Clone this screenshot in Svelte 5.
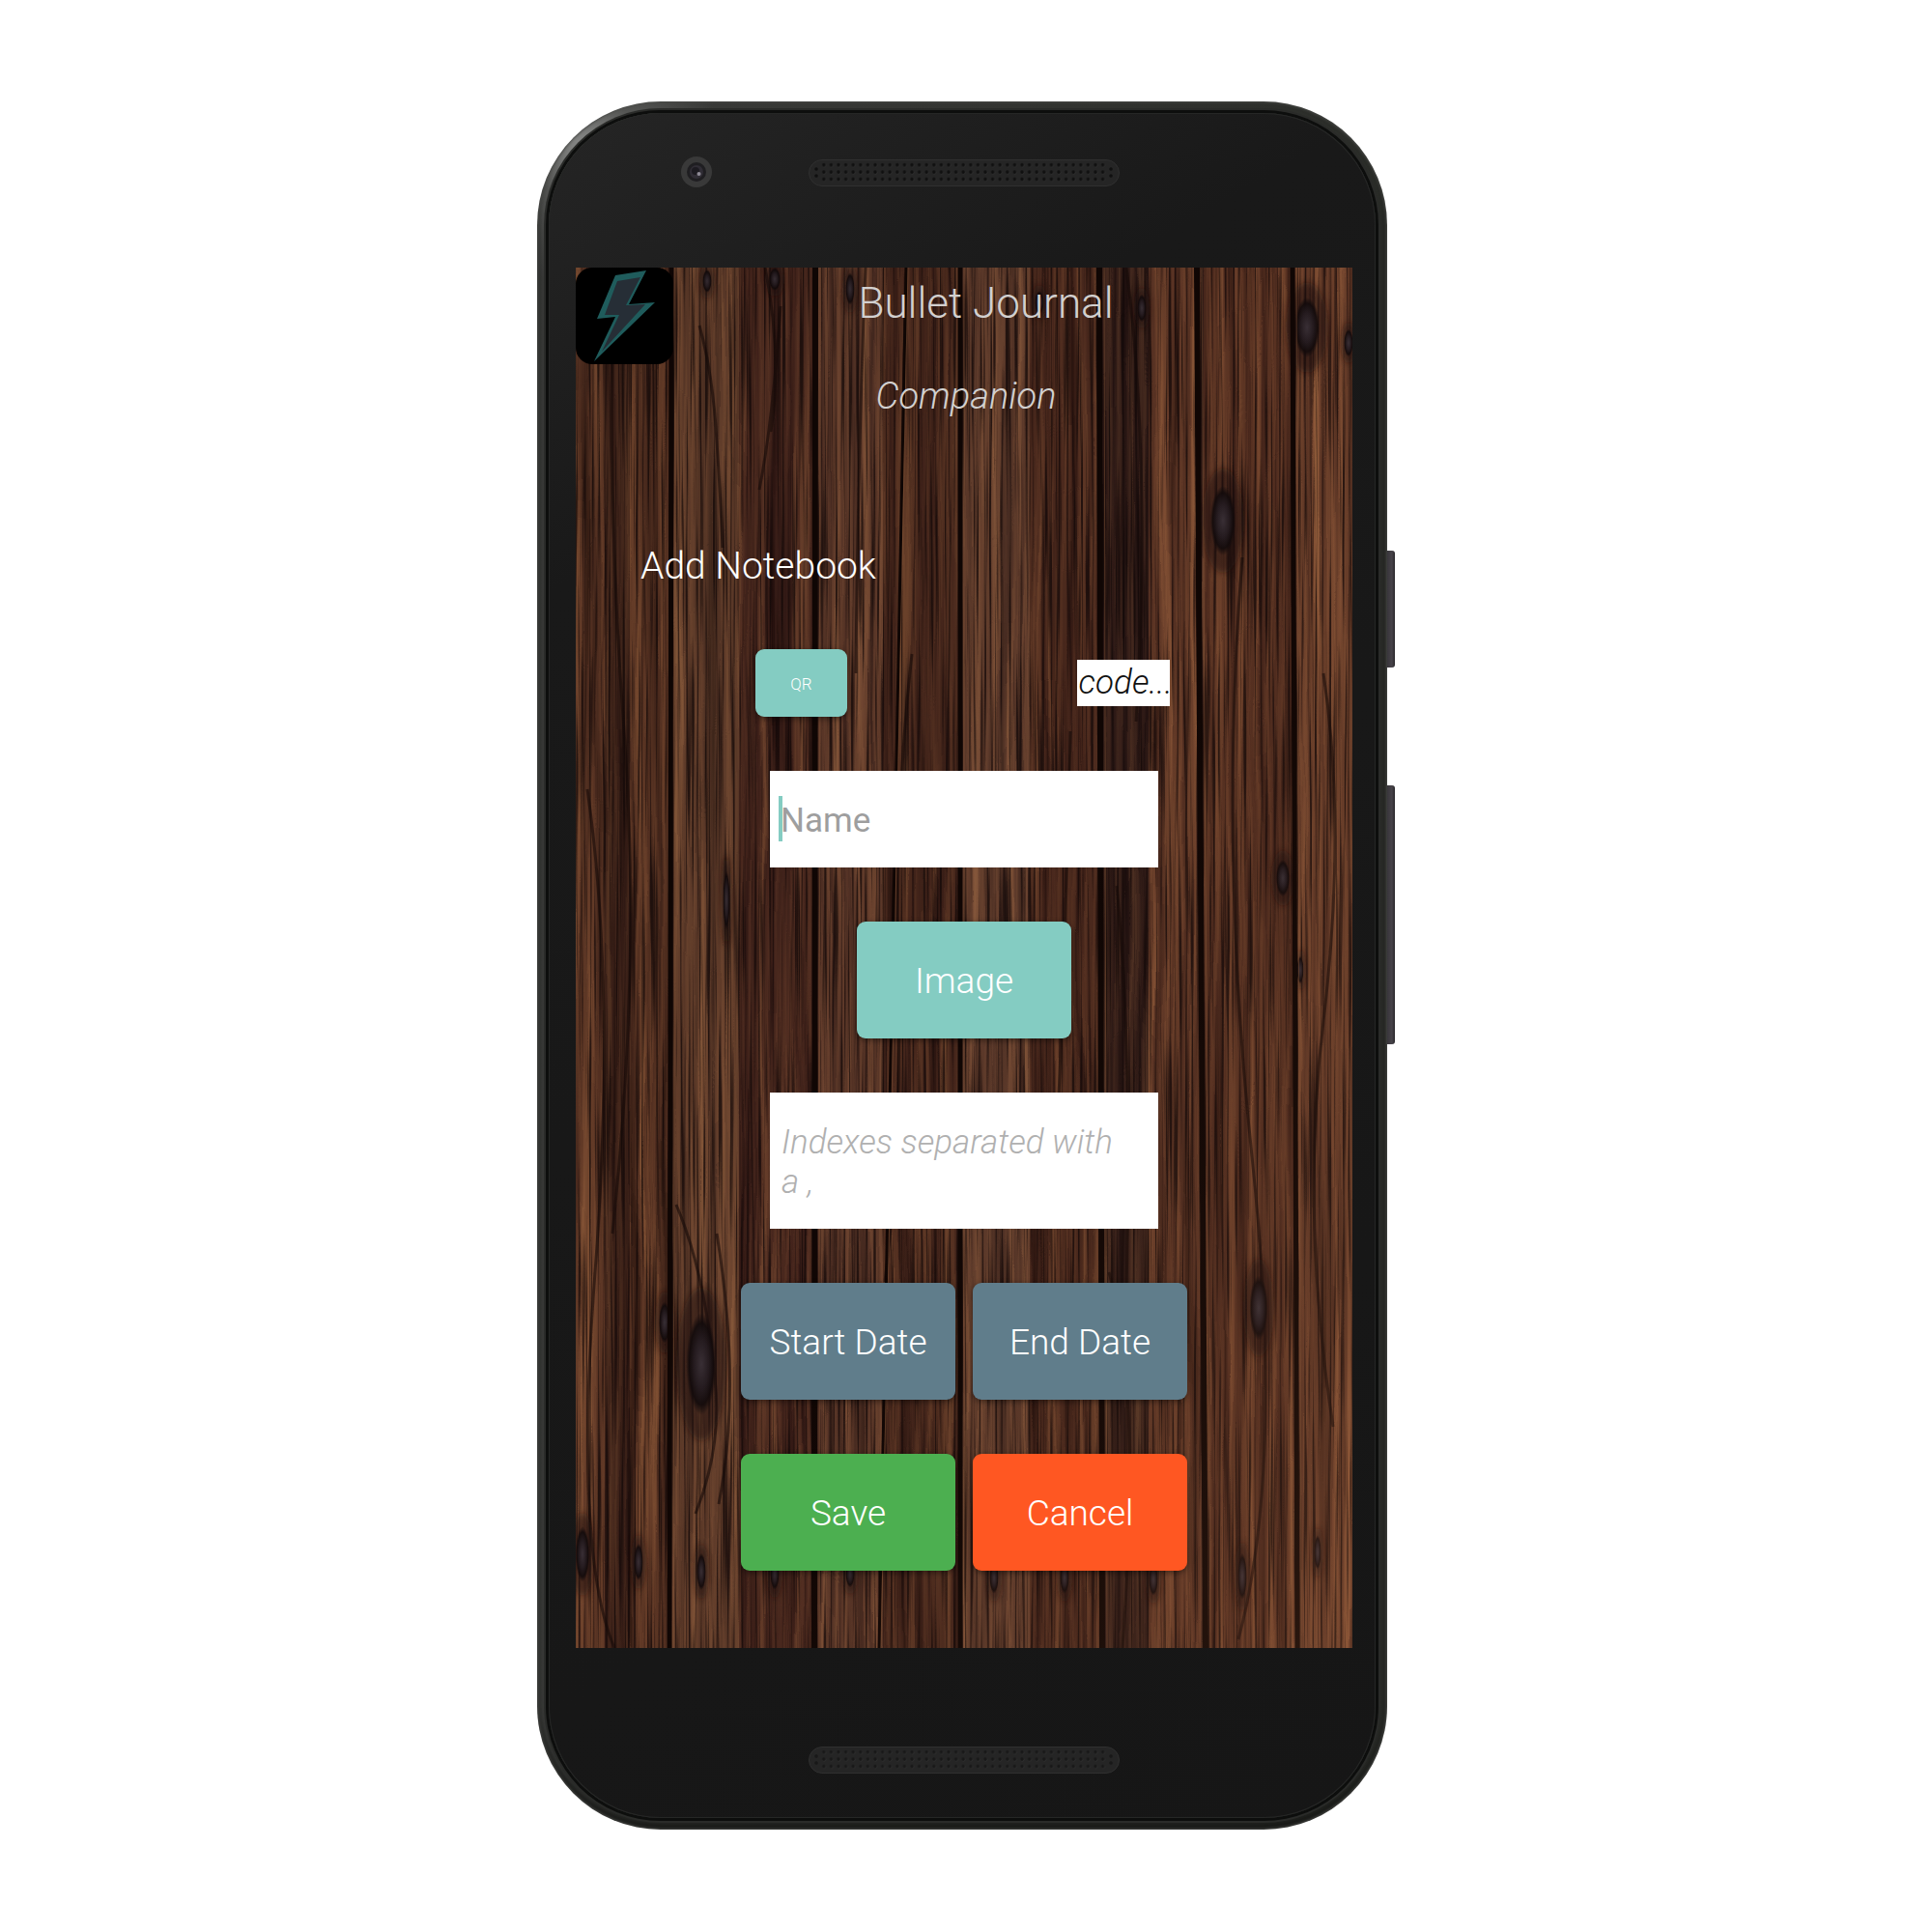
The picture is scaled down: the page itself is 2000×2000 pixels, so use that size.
<script>
  let name = $state('');
  let indexes = $state('');

  // Plank seams of the backdrop: x at the top, x at the bottom, thickness
  const seams = [
    [99, 97, 5],
    [248, 247, 6],
    [342, 314, 3],
    [398, 398, 5],
    [542, 545, 6],
    [643, 652, 6],
    [742, 747, 5],
  ];

  // Tint over each plank: left, width, colour, opacity
  const tints = [
    [0, 30, '#8a4e2c', 0.24],
    [30, 26, '#1c0908', 0.4],
    [56, 43, '#7b4526', 0.22],
    [99, 70, '#8f6040', 0.3],
    [169, 79, '#35140f', 0.3],
    [248, 70, '#80523a', 0.26],
    [318, 80, '#38180f', 0.32],
    [398, 72, '#865a40', 0.28],
    [470, 73, '#3c180f', 0.28],
    [543, 50, '#120a0b', 0.42],
    [593, 54, '#8a4e2e', 0.26],
    [650, 95, '#6e371e', 0.26],
    [745, 59, '#a8623a', 0.26],
  ];

  // Knots: x, y, rx, ry
  const knots = [
    [757, 62, 11, 26],
    [800, 78, 4, 12],
    [586, 42, 4, 12],
    [480, 36, 4, 10],
    [136, 14, 4, 10],
    [206, 12, 5, 10],
    [284, 22, 4, 14],
    [670, 262, 11, 30],
    [156, 655, 3, 26],
    [732, 632, 6, 16],
    [750, 727, 3, 12],
    [130, 1135, 13, 44],
    [92, 1092, 5, 18],
    [707, 1077, 8, 28],
    [7, 1332, 6, 24],
    [65, 1340, 4, 16],
    [130, 1350, 4, 16],
    [690, 1355, 4, 20],
    [768, 1330, 3, 15],
    [206, 1352, 4, 14],
    [284, 1352, 4, 12],
    [433, 1356, 4, 14],
    [506, 1356, 4, 14],
    [598, 1358, 4, 14],
  ];

  const cracks = [
    'M128 60 q14 50 18 120 q4 60 6 110',
    'M196 0 q18 90 6 170',
    'M212 40 q-8 120 -22 190',
    'M300 0 q-8 200 -10 420',
    'M348 400 q-18 160 -14 330 t-14 320',
    'M512 480 q-6 260 -14 420',
    'M570 0 q26 200 10 470',
    'M560 640 q16 160 10 420',
    'M552 1040 q34 120 14 389',
    'M12 540 q30 210 8 500 t20 389',
    'M40 0 q-8 240 10 480 t-12 520',
    'M124 1290 q28 -70 20 -140 q-10 -110 -40 -180',
    'M146 1000 q26 160 2 280',
    'M690 300 q-24 300 10 620 t-14 500',
    'M774 420 q24 160 0 360 t10 420',
  ];
</script>

{#snippet grille(id, dot)}
  <svg class="grille" viewBox="0 0 322 28" aria-hidden="true">
    <defs>
      <pattern {id} x="12" y="2" width="7.6" height="7.4" patternUnits="userSpaceOnUse">
        <circle cx="4.2" cy="4.2" r="1.9" fill="#333" />
        <circle cx="3.8" cy="3.7" r="1.8" fill={dot} />
      </pattern>
    </defs>
    <rect x="0.5" y="0.5" width="321" height="27" rx="13.5" fill="#252525" stroke="#303030" />
    <rect x="12" y="2" width="296.4" height="22.2" fill="url(#{id})" />
    <g fill={dot}>
      <circle cx="8" cy="10" r="1.8" />
      <circle cx="8" cy="17" r="1.8" />
      <circle cx="313" cy="10" r="1.8" />
      <circle cx="313" cy="17" r="1.8" />
    </g>
  </svg>
{/snippet}

<main class="page">
  <div class="device">
    <div class="frame">
      <div class="glass">
        <div class="bezel top">
          <svg class="camera" viewBox="0 0 34 34" aria-hidden="true">
            <circle cx="17" cy="17" r="16" fill="#393939" />
            <circle cx="17" cy="17" r="10" fill="#1f1e21" />
            <circle cx="17" cy="17" r="7" fill="#302d35" />
            <circle cx="16" cy="16" r="4" fill="#1c1a20" />
            <circle cx="19.500" cy="19" r="2" fill="#8f8b96" />
          </svg>
          {@render grille('dots-top', '#101010')}
        </div>

        <div class="screen">
          <svg class="wood" viewBox="0 0 804 1429" preserveAspectRatio="none" aria-hidden="true">
            <defs>
              <filter id="grain" x="0" y="0" width="100%" height="100%" color-interpolation-filters="sRGB">
                <feTurbulence type="fractalNoise" baseFrequency="0.11 0.0014" numOctaves="5" seed="11" result="fine" />
                <feTurbulence type="fractalNoise" baseFrequency="0.012 0.004" numOctaves="2" seed="4" result="warp" />
                <feDisplacementMap in="fine" in2="warp" scale="16" xChannelSelector="R" yChannelSelector="G" />
                <feColorMatrix values="1.5 0 0 0 -0.22  1.5 0 0 0 -0.22  1.5 0 0 0 -0.22  0 0 0 0 1" />
                <feComponentTransfer>
                  <feFuncR type="table" tableValues="0.12 0.22 0.32 0.42 0.54" />
                  <feFuncG type="table" tableValues="0.06 0.125 0.19 0.26 0.35" />
                  <feFuncB type="table" tableValues="0.05 0.1 0.14 0.18 0.23" />
                </feComponentTransfer>
              </filter>
              <filter id="ridges" x="0" y="0" width="100%" height="100%" color-interpolation-filters="sRGB">
                <feTurbulence type="fractalNoise" baseFrequency="0.35 0.005" numOctaves="2" seed="23" />
                <feColorMatrix values="0 0 0 0 0.07  0 0 0 0 0.03  0 0 0 0 0.03  4 0 0 0 -1.95" />
              </filter>
              <filter id="soft" x="-50%" y="-50%" width="200%" height="200%">
                <feGaussianBlur stdDeviation="3" />
              </filter>
              <radialGradient id="knot">
                <stop offset="0" stop-color="#3a3036" />
                <stop offset="0.5" stop-color="#251b1f" />
                <stop offset="0.8" stop-color="#120a0b" stop-opacity="0.9" />
                <stop offset="1" stop-color="#120a0b" stop-opacity="0" />
              </radialGradient>
              <linearGradient id="shade" x1="0" y1="0" x2="1" y2="1">
                <stop offset="0" stop-color="#000" stop-opacity="0.1" />
                <stop offset="0.5" stop-color="#000" stop-opacity="0.02" />
                <stop offset="1" stop-color="#c07a4c" stop-opacity="0.16" />
              </linearGradient>
            </defs>
            <rect width="804" height="1429" fill="#4a2c20" />
            <rect x="-30" y="-30" width="864" height="1489" filter="url(#grain)" />
            {#each tints as [x, w, fill, opacity]}
              <rect {x} y="0" width={w} height="1429" {fill} {opacity} />
            {/each}
            <rect width="804" height="1429" filter="url(#ridges)" opacity="0.75" />
            <g fill="none" stroke="#160a08" stroke-width="3" opacity="0.6">
              {#each cracks as d}
                <path {d} />
              {/each}
            </g>
            {#each knots as [cx, cy, rx, ry]}
              <ellipse {cx} {cy} rx={rx * 2} ry={ry * 1.8} fill="#1a0c09" opacity="0.5" filter="url(#soft)" />
              <ellipse {cx} {cy} rx={rx * 1.2} ry={ry * 1.2} fill="url(#knot)" />
            {/each}
            {#each seams as [a, b, w]}
              <path d="M{a} 0L{b} 1429" stroke="#100604" stroke-width={w} />
              <path d="M{a + w - 1} 0L{b + w - 1} 1429" stroke="#8a5a3a" stroke-width="1" opacity="0.5" />
            {/each}
            <rect width="804" height="1429" fill="url(#shade)" />
          </svg>

          <header class="masthead">
            <svg class="logo" viewBox="0 0 101 100" role="img" aria-label="Bullet Journal logo">
              <rect width="101" height="100" rx="17" fill="#000" />
              <path d="M41 8L73 3L55 38L82 36L19 97L41 51L22 53Z" fill="#1f5c5c" />
              <path d="M43 14L67 10L52 39L72 38L27 87L45 49L30 49Z" fill="#262e36" />
            </svg>
            <h1>Bullet Journal</h1>
          </header>
          <p class="tagline">Companion</p>

          <form class="form" onsubmit={(e) => e.preventDefault()}>
            <h2>Add Notebook</h2>
            <div class="scan">
              <button type="button" class="btn teal small">QR</button>
              <output class="code">code...</output>
            </div>
            <div class="field">
              <input type="text" placeholder="Name" aria-label="Name" bind:value={name} />
              <span class="caret"></span>
            </div>
            <button type="button" class="btn teal image">Image</button>
            <textarea
              placeholder="Indexes separated with a ,"
              aria-label="Indexes separated with a comma"
              bind:value={indexes}
            ></textarea>
            <div class="pair">
              <button type="button" class="btn slate">Start Date</button>
              <button type="button" class="btn slate">End Date</button>
            </div>
            <div class="pair">
              <button type="submit" class="btn green">Save</button>
              <button type="button" class="btn orange">Cancel</button>
            </div>
          </form>
        </div>

        <div class="bezel bottom">
          {@render grille('dots-bottom', '#181818')}
        </div>
      </div>
    </div>
    <div class="keys">
      <span class="key power"></span>
      <span class="key volume"></span>
    </div>
  </div>
</main>

<style>
  :global(body) {
    background: #fff;
  }

  .page {
    display: flex;
    justify-content: center;
    padding: 105px 0;
    font-family: Roboto, 'Liberation Sans', sans-serif;
    font-weight: 300;
    color: #fff;
  }

  .device {
    display: flex;
    width: 100%;
    max-width: 888px;
  }

  .frame {
    flex: 1;
    min-width: 0;
    padding: 12px;
    border-radius: 128px;
    background:
      radial-gradient(circle at 36px 36px, #8a8b8a 0, #555654 60px, transparent 150px),
      linear-gradient(90deg, #3b3c3a 0, #343532 50%, #2b2d29 100%);
    box-shadow:
      inset 0 0 3px 1px #4a4b48,
      inset 0 -8px 10px #151614;
  }

  .glass {
    padding: 0 24px 0 28px;
    border-radius: 116px;
    background: linear-gradient(150deg, #252525 0, #191919 22%, #161616 100%);
    box-shadow:
      0 0 0 3px #0d0e0d,
      0 0 0 5px #2a2b29,
      inset 0 0 0 1px #262726;
  }

  .bezel {
    display: flex;
    box-sizing: border-box;
  }

  .top {
    height: 160px;
    padding: 44px 0 0 108px;
    gap: 99px;
  }

  .bottom {
    height: 176px;
    padding-top: 102px;
    justify-content: center;
  }

  .camera {
    width: 34px;
    height: 34px;
  }

  .grille {
    width: 322px;
    height: 28px;
    margin-top: 4px;
  }

  .bottom .grille {
    margin-top: 0;
  }

  .screen {
    position: relative;
    isolation: isolate;
    padding-bottom: 80px;
  }

  .wood {
    position: absolute;
    inset: 0;
    width: 100%;
    height: 100%;
    z-index: -1;
  }

  .masthead {
    display: grid;
    grid-template-columns: 101px 1fr 56px;
    height: 100px;
  }

  .logo {
    width: 101px;
    height: 100px;
  }

  h1,
  h2,
  p {
    margin: 0;
    font-weight: 300;
  }

  h1 {
    padding-top: 9px;
    font-size: 44px;
    line-height: 56px;
    text-align: center;
    color: #d2d0cf;
  }

  .tagline {
    font-size: 38px;
    line-height: 48px;
    padding: 9px 0 0 4px;
    font-style: italic;
    text-align: center;
    color: #d2d0cf;
  }

  .form {
    display: flex;
    flex-direction: column;
    align-items: center;
    gap: 56px;
    padding: 128px 67px 0;
  }

  h2 {
    align-self: flex-start;
    font-size: 39px;
    line-height: 48px;
  }

  .scan {
    display: grid;
    grid-template-columns: 1fr 1fr;
    place-items: center;
    box-sizing: border-box;
    width: 100%;
    height: 71px;
    margin-top: 5px;
    padding-right: 4px;
  }

  .btn {
    width: 222px;
    height: 121px;
    padding: 2px 0 0;
    border: 0;
    border-radius: 9px;
    font: inherit;
    font-size: 37px;
    line-height: 48px;
    color: #fff;
    box-shadow: 0 2px 6px rgba(0, 0, 0, 0.45);
  }

  .small {
    width: 95px;
    height: 70px;
    font-size: 17px;
  }

  .teal {
    background: #84ccc2;
  }

  .slate {
    background: #607d8b;
  }

  .green {
    background: #4caf50;
  }

  .orange {
    background: #ff5722;
  }

  .code {
    width: 94px;
    padding-left: 2px;
    background: #fff;
    color: #111;
    font-size: 35px;
    line-height: 48px;
    font-style: italic;
    white-space: nowrap;
  }

  .field {
    position: relative;
    width: 402px;
  }

  input,
  textarea {
    display: block;
    box-sizing: border-box;
    width: 402px;
    border: 0;
    border-radius: 0;
    background: #fff;
    color: #222;
    font: inherit;
    font-size: 35px;
    outline: 0;
  }

  input {
    height: 100px;
    padding: 2px 11px 0;
    font-weight: 400;
  }

  textarea {
    height: 141px;
    padding: 31px 36px 29px 12px;
    line-height: 41px;
    font-style: italic;
    resize: none;
    overflow: hidden;
  }

  input::placeholder {
    color: #9e9e9e;
    opacity: 1;
  }

  textarea::placeholder {
    color: #b0b0b0;
    opacity: 1;
  }

  .caret {
    position: absolute;
    left: 9px;
    top: 26px;
    width: 4px;
    height: 47px;
    background: #84ccc2;
  }

  .pair {
    display: flex;
    gap: 18px;
  }

  .keys {
    width: 8px;
    padding-top: 465px;
  }

  .key {
    display: block;
    border-radius: 0 3px 3px 0;
    background: linear-gradient(90deg, #38353a 0, #474349 60%, #2b292c 100%);
  }

  .power {
    height: 121px;
    margin-bottom: 122px;
  }

  .volume {
    height: 268px;
  }
</style>
